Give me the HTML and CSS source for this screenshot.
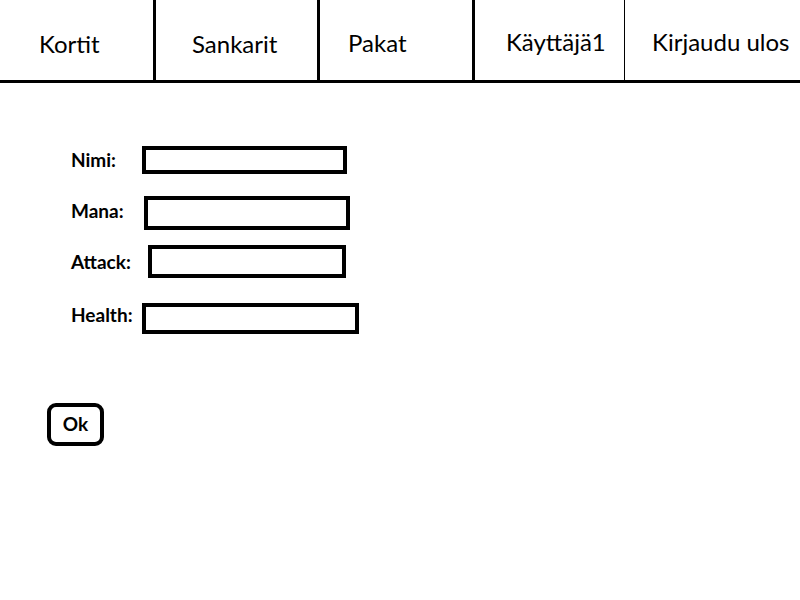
FILE: index.html
```html
<!DOCTYPE html>
<html lang="fi">
<head>
<meta charset="utf-8">
<title>Sankarit</title>
<link rel="stylesheet" href="styles.css">
</head>
<body>
<nav class="nav">
  <div class="nav-cell c1">Kortit</div>
  <div class="nav-cell c2">Sankarit</div>
  <div class="nav-cell c3">Pakat</div>
  <div class="nav-cell c4">Käyttäjä1</div>
  <div class="nav-cell c5">Kirjaudu ulos</div>
</nav>
<form class="form">
  <div class="row r1">
    <label class="label">Nimi:</label>
    <div class="field f1"></div>
  </div>
  <div class="row r2">
    <label class="label">Mana:</label>
    <div class="field f2"></div>
  </div>
  <div class="row r3">
    <label class="label">Attack:</label>
    <div class="field f3"></div>
  </div>
  <div class="row r4">
    <label class="label">Health:</label>
    <div class="field f4"></div>
  </div>
</form>
<div class="actions">
  <div class="ok">Ok</div>
</div>
</body>
</html>
```

FILE: styles.css
```css
html, body {
  margin: 0;
  padding: 0;
  background: #fff;
  color: #000;
  font-family: Lato, "Open Sans", "Liberation Sans", sans-serif;
}

.nav {
  display: flex;
  height: 83px;
  box-sizing: border-box;
  border-bottom: 3px solid #000;
}

.nav-cell {
  box-sizing: border-box;
  height: 80px;
  font-size: 24px;
  line-height: 29px;
  padding-top: 29px;
  white-space: nowrap;
}

.c1 { width: 156px; padding-left: 39px; border-right: 3px solid #000; }
.c2 { width: 164px; padding-left: 36px; border-right: 3px solid #000; }
.c3 { width: 155px; padding-left: 28px; border-right: 3px solid #000; padding-top: 28px; }
.c4 { width: 150px; padding-left: 31px; border-right: 1px solid #000; padding-top: 27px; }
.c5 { flex: 1; padding-left: 27px; padding-top: 27px; }

.form {
  display: flex;
  flex-direction: column;
  padding-left: 71px;
  padding-top: 63px;
}

.row {
  display: flex;
  align-items: center;
}

.label {
  width: 71px;
  font-weight: bold;
  font-size: 19px;
  line-height: 22px;
}

.r2 .label { margin-top: -4px; }
.r4 .label { margin-top: -7px; }

.field {
  box-sizing: border-box;
  border: 4px solid #000;
  background: #fff;
}

.r2 { margin-top: 22px; }
.r3 { margin-top: 15px; }
.r4 { margin-top: 25px; }

.f1 { width: 205px; height: 28px; }
.f2 { width: 206px; height: 34px; margin-left: 2px; }
.f3 { width: 198px; height: 33px; margin-left: 6px; }
.f4 { width: 217px; height: 31px; }

.actions {
  display: flex;
  padding-left: 47px;
  padding-top: 69px;
}

.ok {
  box-sizing: border-box;
  width: 57px;
  height: 43px;
  border: 4px solid #000;
  border-radius: 9px;
  display: flex;
  align-items: center;
  justify-content: center;
  font-weight: bold;
  font-size: 19px;
  padding-bottom: 2px;
}
```
